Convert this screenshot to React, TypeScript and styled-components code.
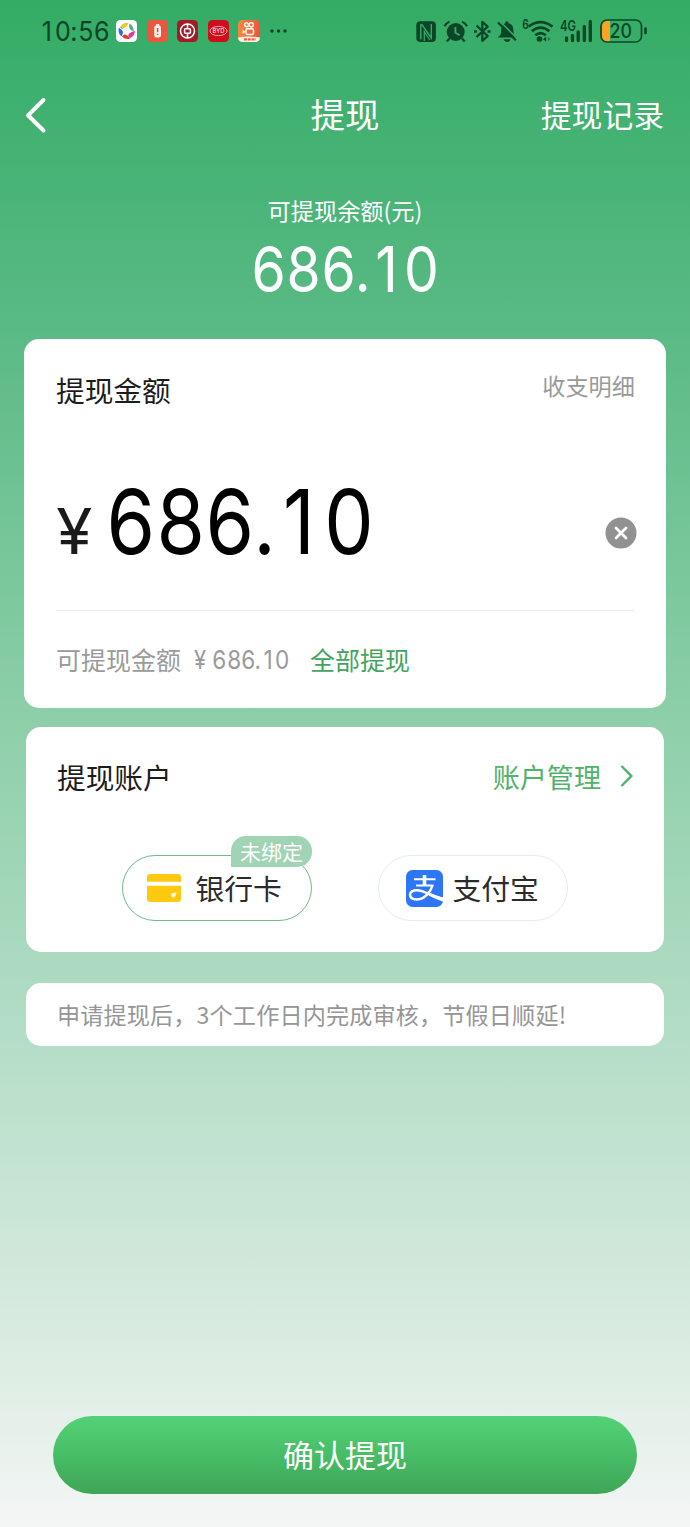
import React from "react";
import styled, { createGlobalStyle } from "styled-components";

const GlobalStyle = createGlobalStyle`
  * { box-sizing: border-box; }
  body {
    margin: 0;
    font-family: "Noto Sans CJK SC", sans-serif;
  }
`;

const ink = "#0d4527";

const Screen = styled.div`
  width: 690px;
  height: 1527px;
  display: flex;
  flex-direction: column;
  overflow: hidden;
  background: linear-gradient(180deg, #33ac65 0%, #5aba85 21.6%, #8dcfa9 47%, #b7dec9 69.4%, #e0eee5 91%, #f4f6f6 100%);
`;

const StatusBar = styled.header`
  height: 62px;
  padding: 0 42px 0 39px;
  display: flex;
  align-items: center;
  justify-content: space-between;
  color: ${ink};
`;

const StatusGroup = styled.div<{ $gap: number }>`
  display: flex;
  align-items: center;
  gap: ${(p) => p.$gap}px;
  svg { display: block; flex: none; }
`;

const Clock = styled.div`
  width: 68px;
  padding-top: 2px;
`;

/* Numerals set in equal slots, each glyph slightly condensed. */
const FigureRow = styled.span<{ $size: number; $line: number }>`
  display: inline-flex;
  flex: none;
  font-family: Inter, sans-serif;
  font-size: ${(p) => p.$size}px;
  line-height: ${(p) => p.$line}px;
`;

const Slot = styled.span<{ $em: number; $scale: number }>`
  display: flex;
  justify-content: center;
  width: ${(p) => p.$em}em;
  transform: scaleX(${(p) => p.$scale});
`;

type FigureProps = { value: string; size: number; line: number; slot?: number; mark?: number; scale?: number };

const Figure = ({ value, size, line, slot = 0.552, mark = 0.21, scale = 0.87 }: FigureProps) => (
  <FigureRow $size={size} $line={line}>
    {[...value].map((ch, i) => (
      <Slot key={i} $em={/[.:]/.test(ch) ? mark : slot} $scale={scale}>{ch}</Slot>
    ))}
  </FigureRow>
);

const NavBar = styled.nav`
  height: 104px;
  padding: 0 26px 0 24px;
  display: grid;
  grid-template-columns: 1fr auto 1fr;
  align-items: center;
  color: #fff;
  svg { display: block; margin-top: 1px; }
`;

const NavTitle = styled.h1`
  margin: -2px -2px 0 0;
  font-size: 34.5px;
  font-weight: 400;
  line-height: 44px;
`;

const NavLink = styled.a`
  justify-self: end;
  margin-top: -1px;
  font-size: 30.8px;
  line-height: 44px;
`;

const Balance = styled.section`
  height: 173px;
  padding-top: 27px;
  display: flex;
  flex-direction: column;
  align-items: center;
  color: #fff;
`;

const BalanceLabel = styled.div`
  font-size: 23.2px;
  line-height: 34px;
  margin-bottom: 10px;
`;

const AmountCard = styled.section`
  height: 369px;
  margin: 0 24px;
  padding: 30px 32px 0 32px;
  border-radius: 15px;
  background: #fff;
`;

const AccountCard = styled.section`
  height: 225px;
  margin: 19px 26px 0;
  padding: 29px 30px 0 31px;
  border-radius: 15px;
  background: #fff;
`;

const CardHead = styled.div`
  display: flex;
  justify-content: space-between;
  height: 42px;
`;

const CardTitle = styled.h2`
  margin: 0;
  font-size: 28.7px;
  font-weight: 400;
  line-height: 41px;
  color: #1c1c1c;
`;

const DetailLink = styled.a`
  margin-right: -1px;
  font-size: 23.2px;
  line-height: 33px;
  color: #9a9a9a;
`;

const AmountRow = styled.div`
  height: 200px;
  padding-top: 66px;
  display: flex;
  align-items: flex-start;
  color: #000;
  border-bottom: 1px solid #e9e9e9;
`;

const YuanSign = styled.div`
  width: 50px;
  padding-top: 22px;
  color: #1a1a1a;
`;

const ClearButton = styled.span`
  margin: 40px -3px 0 auto;
  svg { display: block; }
`;

const HintRow = styled.div`
  display: flex;
  align-items: center;
  height: 38px;
  margin-top: 29px;
  font-size: 25px;
  color: #9a9a9a;
`;

const AvailLabel = styled.span`
  width: 137px;
`;

const HintSum = styled.span`
  display: flex;
  gap: 5px;
  width: 117px;
  padding-top: 1px;
`;

const AllLink = styled.a`
  color: #43a45e;
`;

const ManageLink = styled.a`
  display: flex;
  align-items: center;
  gap: 18px;
  height: 40px;
  font-size: 27.1px;
  color: #50b36a;
  svg { display: block; }
`;

const Methods = styled.div`
  display: flex;
  gap: 66px;
  margin: 57px 0 0 65px;
`;

const Method = styled.div<{ $active?: boolean; $pad: number; $gap: number }>`
  position: relative;
  width: 190px;
  height: 66px;
  padding-left: ${(p) => p.$pad}px;
  display: flex;
  align-items: center;
  gap: ${(p) => p.$gap}px;
  border: 1.5px solid ${(p) => (p.$active ? "#70b98b" : "#e3eeea")};
  border-radius: 33px;
  font-size: 28.8px;
  color: #2b2b2b;
  white-space: nowrap;
  svg { display: block; flex: none; }
`;

const MethodName = styled.span`
  padding-bottom: 2px;
`;

const Badge = styled.span`
  position: absolute;
  top: -20px;
  right: -1px;
  width: 81px;
  height: 31px;
  border-radius: 15px 15px 15px 0;
  background: #a0d4b5;
  color: #fff;
  font-size: 21px;
  line-height: 30px;
  text-align: center;
`;

const Notice = styled.p`
  height: 63px;
  margin: 31px 26px 0;
  padding-left: 31px;
  border-radius: 15px;
  background: #fff;
  color: #969696;
  font-size: 23.15px;
  letter-spacing: 0.13px;
  line-height: 62px;
`;

const Confirm = styled.button`
  width: 584px;
  height: 78px;
  margin: auto 53px 33px;
  padding: 0 0 2px;
  border: 0;
  border-radius: 39px;
  background: linear-gradient(180deg, #54d277 0%, #47bd66 50%, #3fa557 100%);
  color: #fff;
  font: 31px/76px "Noto Sans CJK SC", sans-serif;
`;

const PinwheelApp = () => (
  <svg width="21" height="22" viewBox="0 0 21 22">
    <rect width="21" height="22" rx="4.5" fill="#fff" />
    <path d="M4.500 6.500Q6.500 2.500 12.500 2.500Q12 6.500 8.500 7.800Q6.500 8.300 4.500 6.500Z" fill="#f5c72e" />
    <path d="M4.300 6.500Q6.500 8.500 9 7.800L6 8.800Q4.500 8.500 4.300 6.500Z" fill="#3aae5d" />
    <path d="M13.500 3.500Q17.500 5.500 17.800 11.500Q14.500 10.500 13.300 8Q12.800 5.500 13.500 3.500Z" fill="#4fae88" />
    <path d="M19 11Q18.500 16 14.500 18Q11.500 17 12.500 14.500Q14.500 11.500 19 11Z" fill="#e7359a" />
    <path d="M14 18.800Q9 20 6 16.500Q7 14.200 9.500 14.500Q12.500 15.500 14 18.800Z" fill="#e8392d" />
    <path d="M5.500 16.500Q1.500 13 2.800 7.800Q6.500 9.500 7 12Q7 14.500 5.500 16.500Z" fill="#2871dc" />
  </svg>
);

const PowerApp = () => (
  <svg width="21" height="22" viewBox="0 0 21 22">
    <rect width="21" height="22" rx="4.5" fill="#ee5440" />
    <rect x="8.800" y="4" width="3.600" height="2.500" rx=".8" fill="#ffe9df" />
    <rect x="7.200" y="5.400" width="6.800" height="12" rx="2.200" fill="#fff2e8" />
    <path d="M10.600 8v4.200M10.600 13.700v1.300" stroke="#e14c39" strokeWidth="1.500" />
  </svg>
);

const BankApp = () => (
  <svg width="21" height="22" viewBox="0 0 21 22">
    <rect width="21" height="22" rx="4.500" fill="#a51a27" />
    <circle cx="10.500" cy="11" r="7" fill="none" stroke="#fff" strokeWidth="1.500" />
    <rect x="7.600" y="8.700" width="5.800" height="4.600" rx=".8" fill="none" stroke="#fff" strokeWidth="1.500" />
    <path d="M10.500 4v4.500M10.500 13.500V18" stroke="#fff" strokeWidth="1.600" />
  </svg>
);

const CarApp = () => (
  <svg width="21" height="22" viewBox="0 0 21 22">
    <rect width="21" height="22" rx="4.500" fill="#cf0e1b" />
    <ellipse cx="10.500" cy="11" rx="8.600" ry="4.600" fill="none" stroke="#f3b6b6" strokeWidth=".9" />
    <text x="10.500" y="13" textAnchor="middle" fontFamily="Inter, sans-serif" fontSize="5.600" textLength="12" lengthAdjust="spacingAndGlyphs" fill="#fff">BYD</text>
  </svg>
);

const VideoApp = () => (
  <svg width="22" height="22" viewBox="0 0 22 22">
    <defs>
      <linearGradient id="videoBg" x1="0" y1="0" x2="1" y2="0">
        <stop offset="0" stopColor="#f4893a" />
        <stop offset="1" stopColor="#f2513b" />
      </linearGradient>
      <clipPath id="videoClip"><rect width="22" height="22" rx="4.500" /></clipPath>
    </defs>
    <g clipPath="url(#videoClip)">
      <rect width="22" height="22" fill="url(#videoBg)" />
      <path d="M0 17.500Q10 15.500 22 17.500V22H0Z" fill="#fff1e6" />
      <path d="M6 19.400h12" stroke="#e8623e" strokeWidth="2.400" strokeDasharray="3 .8" />
    </g>
    <circle cx="8.500" cy="4.800" r="1.900" fill="none" stroke="#fff" strokeWidth="1.400" />
    <circle cx="13.300" cy="4.800" r="2.100" fill="none" stroke="#fff" strokeWidth="1.400" />
    <rect x="8" y="8.800" width="7.500" height="5.800" rx="1.500" fill="none" stroke="#fff" strokeWidth="1.500" />
    <path d="M7.500 11.800L4.600 9.800v4.200Z" fill="#fff" />
  </svg>
);

const MoreDots = () => (
  <svg width="18" height="6" viewBox="0 0 18 6" fill={ink}>
    <circle cx="3" cy="3" r="1.700" /><circle cx="9.500" cy="3" r="1.700" /><circle cx="16" cy="3" r="1.700" />
  </svg>
);

const SystemIcons = () => (
  <svg width="234" height="28" viewBox="414 17 234 28" fill="none" stroke={ink}>
    {/* NFC */}
    <rect x="416.300" y="21.300" width="19.600" height="20.600" rx="4" fill={ink} stroke="none" />
    <path d="M420.800 39.500V25.200q.3-1.200 1.400-.2L431.300 38V24" stroke="#34ab65" strokeWidth="1.400" />
    <path d="M424.300 41V31.500l5.500 8.500" stroke="#34ab65" strokeWidth="1.200" />
    {/* alarm */}
    <circle cx="455.700" cy="32" r="9" fill={ink} stroke="none" />
    <path d="M444.500 26.300q1.500-3.200 5-4.700M467 26.300q-1.500-3.200-5-4.700" strokeWidth="2.100" />
    <path d="M449.500 38.500l-2.700 3M462 38.500l2.700 3" strokeWidth="2.200" />
    <path d="M455.400 27v5.700l4.300 2.500" stroke="#34ab65" strokeWidth="1.900" />
    {/* bluetooth */}
    <path d="M476.500 25.500L487.700 36 482.300 40.800V21.800L487.700 26.600 476.500 37" strokeWidth="2.300" strokeLinejoin="round" />
    <path d="M474 31.500h2.800M487.500 31.500h3" strokeWidth="2.400" />
    {/* muted bell */}
    <path d="M497.800 37.500q3.400-2.200 3.400-5v-2.500q0-5.800 4.200-6.800V21.500h3v1.700q5 1 5 6.800v2q0 3 3 5.500Z" fill={ink} stroke="none" />
    <path d="M503.500 39.300h7q-.8 2.700-3.500 2.700t-3.500-2.700Z" fill={ink} stroke="none" />
    <path d="M499.800 21.200l17.500 17.500" stroke="#34ab65" strokeWidth="1.600" />
    <path d="M498 22.500l17.800 17.800" strokeWidth="2.200" />
    {/* wifi */}
    <path d="M528.500 26.700q12-9 24 0" strokeWidth="2.700" />
    <path d="M531.800 31.100q8.800-7 17.600 0" strokeWidth="2.700" />
    <path d="M535.300 35.300q5.300-4.500 10.500 0" strokeWidth="2.700" />
    <circle cx="539.500" cy="39" r="2.800" fill={ink} stroke="none" />
    <path d="M543 39.200l3.200-2.700v5Z" fill={ink} stroke="none" />
    <path d="M550.300 39l-2.300-2.300v4.600Z" fill="#1f7040" stroke="none" />
    {/* signal */}
    <path d="M566.500 38V40.500M572.500 35.500V40.500M578.200 32V40.500M584.300 26.500V40.500M590.300 21.500V40.500" strokeWidth="3.300" strokeLinecap="round" />
    {/* battery */}
    <path d="M607 20.800h3v21.500h-3q-5-.5-5-5V26q0-5 5-5.200Z" fill="#faa329" stroke="none" />
    <rect x="601" y="20" width="40.500" height="22" rx="6" strokeWidth="1.700" />
    <path d="M645.500 28.500v4.500" strokeWidth="2.600" strokeLinecap="round" />
    <g fill={ink} stroke="none" fontFamily="Inter, sans-serif">
      <text x="522.300" y="29" fontSize="12.500" fontWeight="600" textLength="6.500" lengthAdjust="spacingAndGlyphs">6</text>
      <text x="560" y="30.500" fontSize="14" fontWeight="600" textLength="16" lengthAdjust="spacingAndGlyphs">4G</text>
      <text x="609.500" y="38.300" fontSize="20.500" fontWeight="500" textLength="22.500" lengthAdjust="spacingAndGlyphs">20</text>
    </g>
  </svg>
);

const BackIcon = () => (
  <svg width="24" height="38" viewBox="0 0 24 38" fill="none" stroke="#fff" strokeWidth="4" strokeLinecap="round" strokeLinejoin="round">
    <path d="M19.500 4L4 19.300 19.500 34.500" />
  </svg>
);

const ClearIcon = () => (
  <svg width="32" height="32" viewBox="0 0 32 32">
    <circle cx="16" cy="16" r="15.500" fill="#919191" />
    <path d="M11 11l10 10M21 11L11 21" stroke="#fff" strokeWidth="2.700" strokeLinecap="round" />
  </svg>
);

const ChevronIcon = () => (
  <svg width="15" height="24" viewBox="0 0 15 24" fill="none" stroke="#50b36a" strokeWidth="2.500">
    <path d="M2.500 2L12.300 12 2.500 22" />
  </svg>
);

const BankCardIcon = () => (
  <svg width="34" height="28" viewBox="0 0 34 28">
    <path d="M3 0H31q3 0 3 3V7.700H0V3q0-3 3-3ZM0 11.700H34V25q0 3-3 3H3q-3 0-3-3Z" fill="#fec90f" />
    <path d="M24.500 19.200l5-1-.8 3.200q-.7 2-2.600 2-2.300-.2-2-2.500Z" fill="#fff8dc" />
  </svg>
);

const AlipayIcon = () => (
  <svg width="37" height="37" viewBox="0 0 37 37">
    <rect width="37" height="37" rx="6.500" fill="#2d76f6" />
    <g fill="none" stroke="#fff" strokeLinecap="butt">
      <path d="M18.500 5v10.500" strokeWidth="3.600" />
      <path d="M8 9.300h21.500M10 15.500h17.500" strokeWidth="2" />
      <path d="M26.500 15.500C24.500 22 18.500 29.500 11 29.500 6.500 29.500 4 27.500 4 24.800 4 22 7 20 11 20.200 18 20.500 26 26 37 29" strokeWidth="2.500" />
    </g>
    <path d="M24 24Q30 26.700 37 27.500V31.500Q29 29 22.500 25.500Z" fill="#fff" />
  </svg>
);

export default function App() {
  return (
    <Screen>
      <GlobalStyle />
      <StatusBar>
        <StatusGroup $gap={9.4}>
          <Clock>
            <Figure value="10:56" size={27.2} line={30} slot={0.572} mark={0.29} scale={0.92} />
          </Clock>
          <PinwheelApp />
          <PowerApp />
          <BankApp />
          <CarApp />
          <VideoApp />
          <MoreDots />
        </StatusGroup>
        <SystemIcons />
      </StatusBar>

      <NavBar>
        <BackIcon />
        <NavTitle>提现</NavTitle>
        <NavLink>提现记录</NavLink>
      </NavBar>

      <Balance>
        <BalanceLabel>可提现余额(元)</BalanceLabel>
        <Figure value="686.10" size={63.5} line={64} />
      </Balance>

      <AmountCard>
        <CardHead>
          <CardTitle>提现金额</CardTitle>
          <DetailLink>收支明细</DetailLink>
        </CardHead>
        <AmountRow>
          <YuanSign>
            <Figure value="¥" size={63} line={64} slot={0.58} scale={1.04} />
          </YuanSign>
          <Figure value="686.10" size={90} line={90} />
          <ClearButton><ClearIcon /></ClearButton>
        </AmountRow>
        <HintRow>
          <AvailLabel>可提现金额</AvailLabel>
          <HintSum>
            <Figure value="¥" size={26} line={30} scale={0.85} />
            <Figure value="686.10" size={26} line={30} />
          </HintSum>
          <AllLink>全部提现</AllLink>
        </HintRow>
      </AmountCard>

      <AccountCard>
        <CardHead>
          <CardTitle>提现账户</CardTitle>
          <ManageLink>账户管理<ChevronIcon /></ManageLink>
        </CardHead>
        <Methods>
          <Method $active $pad={23.5} $gap={15}>
            <BankCardIcon />
            <MethodName>银行卡</MethodName>
            <Badge>未绑定</Badge>
          </Method>
          <Method $pad={26.5} $gap={10}>
            <AlipayIcon />
            <MethodName>支付宝</MethodName>
          </Method>
        </Methods>
      </AccountCard>

      <Notice>申请提现后，3个工作日内完成审核，节假日顺延!</Notice>

      <Confirm>确认提现</Confirm>
    </Screen>
  );
}
